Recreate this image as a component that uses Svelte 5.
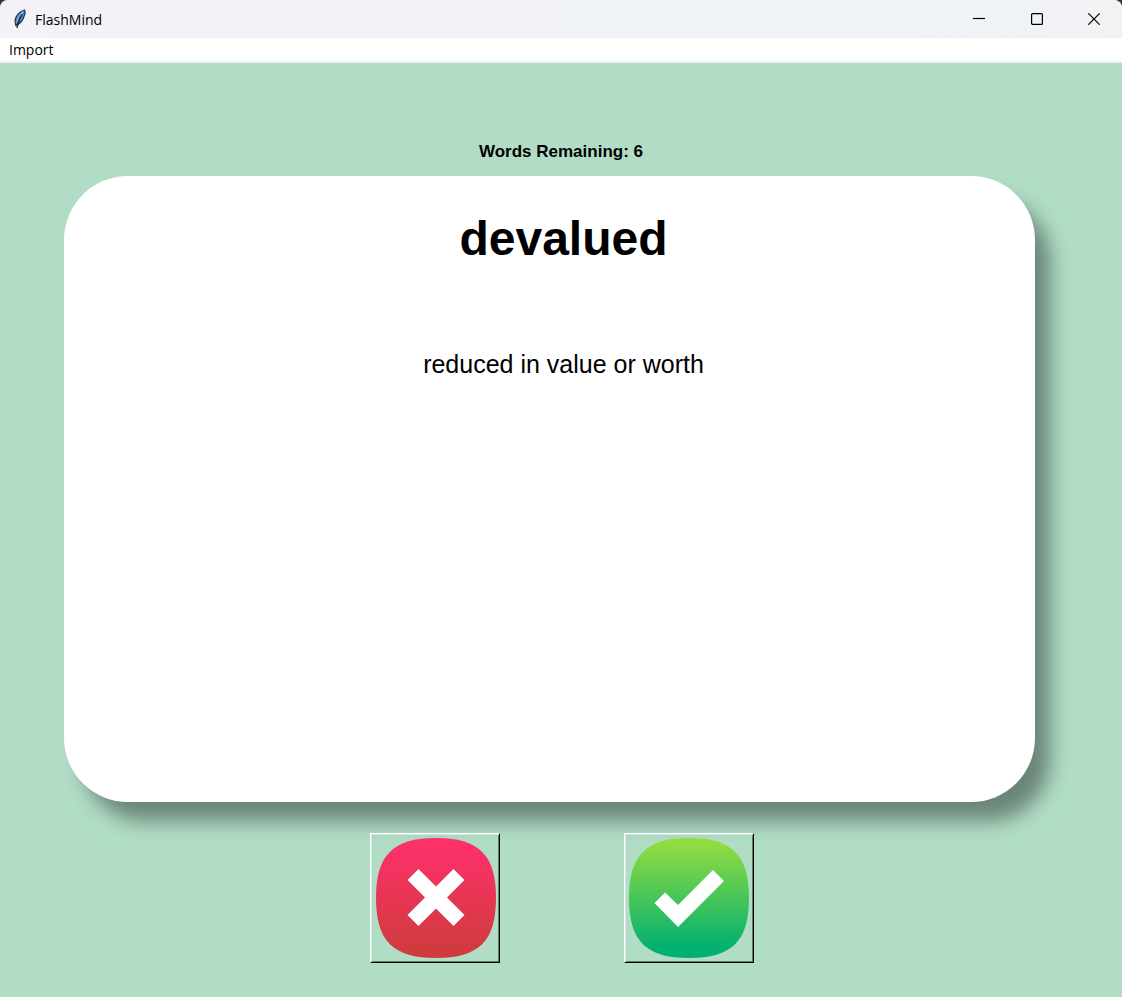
<script>
  let remaining = $state(6);
  let card = $state({ word: 'devalued', meaning: 'reduced in value or worth' });
</script>

<svelte:head><title>FlashMind</title></svelte:head>

<div class="window">
  <header class="titlebar">
    <svg class="feather" width="16" height="22" viewBox="0 0 16 22" aria-hidden="true">
      <path d="M12.500 2C8 3 3.500 8 3 12.500L3.800 17.500C8 16 11.500 12 12 8.500C13.300 6 13.500 4 12.500 2Z" fill="#4585cc" stroke="#2c3743" stroke-width="1.200" />
      <path d="M11.500 3.500C8 6.500 5.500 10.500 4.800 14.500" fill="none" stroke="#86b6e8" stroke-width="1.400" />
      <path d="M10 6.500C7.500 10 6 14 5 20" fill="none" stroke="#25282c" stroke-width="1.400" />
    </svg>
    <span class="title">FlashMind</span>
    <div class="controls">
      <button aria-label="Minimize">
        <svg width="12" height="12" viewBox="0 0 12 12"><path d="M0 5.500H12" /></svg>
      </button>
      <button aria-label="Maximize">
        <svg width="12" height="12" viewBox="0 0 12 12"><rect x="0.600" y="0.600" width="10.800" height="10.800" rx="1" /></svg>
      </button>
      <button aria-label="Close">
        <svg width="12" height="12" viewBox="0 0 12 12"><path d="M0.300 0.300L11.700 11.700M11.700 0.300L0.300 11.700" /></svg>
      </button>
    </div>
  </header>

  <nav class="menubar"><button>Import</button></nav>

  <main>
    <p class="remaining">Words Remaining: {remaining}</p>
    <section class="card">
      <h1>{card.word}</h1>
      <p class="meaning">{card.meaning}</p>
    </section>
    <div class="answers">
      <button aria-label="Unknown">
        <svg width="122" height="122" viewBox="0 0 122 122">
          <defs>
            <linearGradient id="red" x1="0" y1="0" x2="0" y2="1">
              <stop offset="0.080" stop-color="#fd3069" />
              <stop offset="0.920" stop-color="#d03b3e" />
            </linearGradient>
          </defs>
          <path d="M61 1C104 1 121 18 121 61S104 121 61 121S1 104 1 61S18 1 61 1Z" fill="url(#red)" />
          <path d="M43.500 32L61 49.500L78.500 32L89.500 43L72 60.500L89.500 78L78.500 89L61 71.500L43.500 89L32.500 78L50 60.500L32.500 43Z" fill="#fff" />
        </svg>
      </button>
      <button aria-label="Known">
        <svg width="122" height="122" viewBox="0 0 122 122">
          <defs>
            <linearGradient id="green" x1="0" y1="0" x2="0" y2="1">
              <stop offset="0.050" stop-color="#91dc40" />
              <stop offset="0.920" stop-color="#02b071" />
            </linearGradient>
          </defs>
          <path d="M60 1C103 1 120 18 120 61S103 121 60 121S0 104 0 61S17 1 60 1Z" fill="url(#green)" />
          <path d="M36 55.500L49 68L84 33L95 44L49 90L25.500 66Z" fill="#fff" />
        </svg>
      </button>
    </div>
  </main>
</div>

<style>
  :global(body) {
    margin: 0;
    background: #3a3638;
  }
  .window {
    display: flex;
    flex-direction: column;
    min-height: 100vh;
    overflow: hidden;
    border-radius: 8px 8px 0 0;
    color: #000;
    background: #b1ddc6;
    font-family: "Liberation Sans", Arial, sans-serif;
  }
  button {
    margin: 0;
    padding: 0;
    border: 0;
    background: none;
    color: inherit;
    font: inherit;
  }
  svg {
    display: block;
  }
  .titlebar {
    display: flex;
    align-items: center;
    height: 38px;
    padding-left: 12px;
    background: linear-gradient(90deg, #f2f2f8, #eff3f7 85%, #f1f2f4);
    font: 14px "Open Sans", "Noto Sans", sans-serif;
  }
  .title {
    margin-left: 7px;
    line-height: 19px;
  }
  .controls {
    display: flex;
    align-self: stretch;
    margin-left: auto;
  }
  .controls button {
    display: grid;
    place-items: center;
    width: 58px;
  }
  .controls button:last-child {
    width: 56px;
  }
  .controls svg {
    fill: none;
    stroke: #000;
    stroke-width: 1.2;
  }
  .menubar {
    display: flex;
    align-items: center;
    height: 23px;
    padding-left: 9px;
    background: #fff;
    border-bottom: 2px solid #f0f0f0;
    font: 14px "Open Sans", "Noto Sans", sans-serif;
  }
  main {
    display: flex;
    flex: 1;
    flex-direction: column;
    padding: 77px 87px 34px 64px;
  }
  .remaining {
    margin: 0 0 12px 23px;
    font-size: 17px;
    font-weight: bold;
    line-height: 24px;
    text-align: center;
  }
  .card {
    flex: 1;
    padding: 33px 0 32px 28px;
    border-radius: 64px;
    background: #fff;
    box-shadow: 17px 21px 20px -2px #6a8577;
    text-align: center;
  }
  h1 {
    margin: 0 0 79px;
    font-size: 48px;
    line-height: 60px;
  }
  .meaning {
    margin: 0;
    font-size: 25px;
    line-height: 32px;
  }
  .answers {
    display: flex;
    justify-content: center;
    gap: 124px;
    margin-top: 31px;
    padding-left: 25px;
  }
  .answers button {
    padding: 3px 2px 3px 4px;
    border: 1px solid;
    border-color: #fff #000 #000 #fff;
    box-shadow: inset 1px 1px #cfeadc, inset -1px -1px #5f7a6c;
  }
</style>
